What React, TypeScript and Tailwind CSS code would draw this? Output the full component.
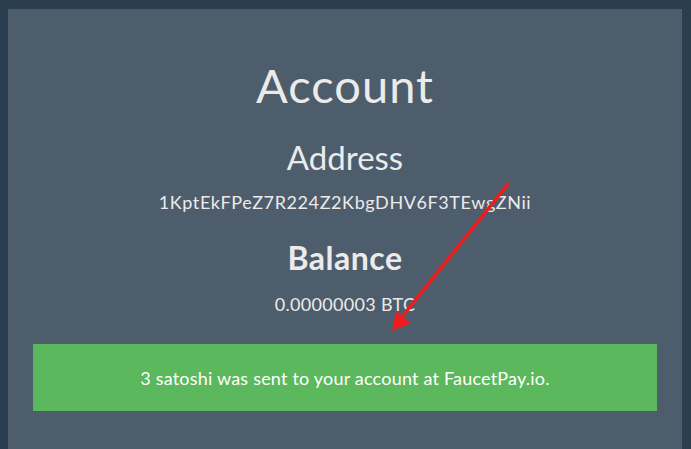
import React from 'react';

const ADDRESS = '1KptEkFPeZ7R224Z2KbgDHV6F3TEwgZNii';

export default function App() {
  return (
    <div className="relative w-[691px] h-[449px] overflow-hidden bg-[#2b3e50] pl-[8px] pr-[9px] pt-[9px] font-['Lato',sans-serif] text-[#ebebeb]">
      <div className="h-[460px] bg-[#4e5d6c] px-[25px] pt-[48px] flex flex-col items-center text-center">
        <h1 className="text-[47px] leading-[56px] font-normal tracking-[1px]">Account</h1>

        <h2 className="mt-[24px] text-[33px] leading-[40px] font-normal">Address</h2>
        <p className="mt-[14px] text-[18px] leading-[22px] tracking-[0.6px]">{ADDRESS}</p>

        <h2 className="mt-[26px] text-[32px] leading-[38px] font-bold tracking-[0.5px]">Balance</h2>
        <p className="mt-[16px] text-[18px] leading-[22px] tracking-[0.3px]">0.00000003 BTC</p>

        {/* alert */}
        <div className="mt-[29px] w-full h-[67px] bg-[#5cb85c] flex items-center justify-center text-white text-[18px] leading-[24px] tracking-[0.2px]">
          3 satoshi was sent to your account at FaucetPay.io.
        </div>
      </div>

      {/* annotation arrow drawn on top of the screenshot */}
      <svg className="absolute left-0 top-0 pointer-events-none" width="691" height="449" viewBox="0 0 691 449">
        <line x1="508" y1="184" x2="401" y2="318" stroke="#ee1c1c" strokeWidth="3.5" strokeLinecap="round" />
        <polygon points="392,331 396,311 411,323" fill="#ee1c1c" />
      </svg>
    </div>
  );
}
